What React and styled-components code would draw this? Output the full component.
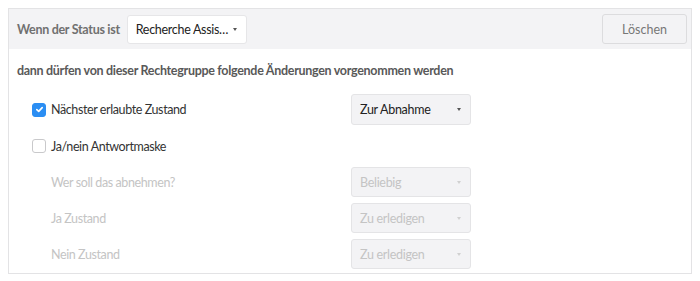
import React from "react";
import styled, { createGlobalStyle } from "styled-components";

const GlobalStyle = createGlobalStyle`
  body {
    margin: 8px;
    font-family: Lato, "Open Sans", sans-serif;
    font-size: 12.5px;
    color: #333;
    background: #fff;
  }
`;

const Card = styled.div`
  width: 682px;
  height: 264px;
  border: 1px solid #e3e3e5;
  overflow: hidden;
`;

const Header = styled.div`
  display: flex;
  align-items: center;
  justify-content: space-between;
  height: 40px;
  padding: 0 4px 0 8px;
  background: #f3f3f5;
`;

const HeaderLeft = styled.div`
  display: flex;
  align-items: center;
  gap: 7px;
`;

const HeaderLabel = styled.span`
  font-weight: 700;
  color: #707070;
  letter-spacing: -0.3px;
`;

const Select = styled.div`
  display: flex;
  align-items: center;
  justify-content: space-between;
  box-sizing: border-box;
  width: ${(p) => p.$width || 120}px;
  height: ${(p) => p.$height || 30}px;
  padding: 0 9px 0 8px;
  border: 1px solid ${(p) => (p.$white ? "#e6e6e8" : "#e4e4e6")};
  border-radius: 3px;
  background: ${(p) => (p.$white ? "#fff" : "#f3f3f5")};
  color: ${(p) => (p.$disabled ? "#c4c4c4" : "#222")};
  white-space: nowrap;
  letter-spacing: -0.3px;
`;

const Caret = styled.span`
  width: 0;
  height: 0;
  border-left: 2.5px solid transparent;
  border-right: 2.5px solid transparent;
  border-top: 3px solid ${(p) => (p.$disabled ? "#d0d0d0" : "#555")};
`;

const Button = styled.button`
  box-sizing: border-box;
  width: 85px;
  height: 30px;
  border: 1px solid #dcdcde;
  border-radius: 3px;
  background: #f3f3f5;
  font: inherit;
  color: #777;
`;

const Body = styled.div`
  padding: 14px 0 0 23px;
`;

const Intro = styled.div`
  margin-left: -15px;
  font-weight: 700;
  color: #595959;
  line-height: 16px;
  margin-bottom: 15px;
  letter-spacing: -0.3px;
`;

const Rows = styled.div`
  display: flex;
  flex-direction: column;
  gap: 6px;
`;

const Row = styled.div`
  display: grid;
  grid-template-columns: 319px 120px;
  align-items: center;
  min-height: ${(p) => p.$h || 30}px;
`;

const Label = styled.label`
  display: flex;
  align-items: center;
  gap: 5px;
  padding-left: ${(p) => (p.$indent ? 19 : 0)}px;
  color: ${(p) => (p.$disabled ? "#c4c4c4" : "#333")};
  letter-spacing: -0.4px;
`;

const Box = styled.span`
  display: flex;
  align-items: center;
  justify-content: center;
  box-sizing: border-box;
  width: 14px;
  height: 14px;
  border-radius: 3px;
  border: 1px solid ${(p) => (p.$checked ? "#2b8ef3" : "#c9c9cb")};
  background: ${(p) => (p.$checked ? "#2b8ef3" : "#fff")};
`;

function Checkbox({ checked }) {
  return (
    <Box $checked={checked}>
      {checked && (
        <svg width="9" height="9" viewBox="0 0 9 9">
          <path d="M1.8 4.6 L3.7 6.4 L7.2 2.6" fill="none" stroke="#fff" strokeWidth="1.6" strokeLinecap="round" strokeLinejoin="round" />
        </svg>
      )}
    </Box>
  );
}

function Dropdown({ value, disabled, height, white }) {
  return (
    <Select $disabled={disabled} $height={height} $white={white}>
      <span>{value}</span>
      <Caret $disabled={disabled} />
    </Select>
  );
}

export default function App() {
  return (
    <>
      <GlobalStyle />
      <Card>
        <Header>
          <HeaderLeft>
            <HeaderLabel>Wenn der Status ist</HeaderLabel>
            <Dropdown value="Recherche Assis…" white height={29} />
          </HeaderLeft>
          <Button>Löschen</Button>
        </Header>
        <Body>
          <Intro>dann dürfen von dieser Rechtegruppe folgende Änderungen vorgenommen werden</Intro>
          <Rows>
            <Row $h={31}>
              <Label>
                <Checkbox checked />
                Nächster erlaubte Zustand
              </Label>
              <Dropdown value="Zur Abnahme" height={31} />
            </Row>
            <Row>
              <Label>
                <Checkbox />
                Ja/nein Antwortmaske
              </Label>
            </Row>
            <Row>
              <Label $indent $disabled>Wer soll das abnehmen?</Label>
              <Dropdown value="Beliebig" disabled />
            </Row>
            <Row>
              <Label $indent $disabled>Ja Zustand</Label>
              <Dropdown value="Zu erledigen" disabled />
            </Row>
            <Row>
              <Label $indent $disabled>Nein Zustand</Label>
              <Dropdown value="Zu erledigen" disabled />
            </Row>
          </Rows>
        </Body>
      </Card>
    </>
  );
}
